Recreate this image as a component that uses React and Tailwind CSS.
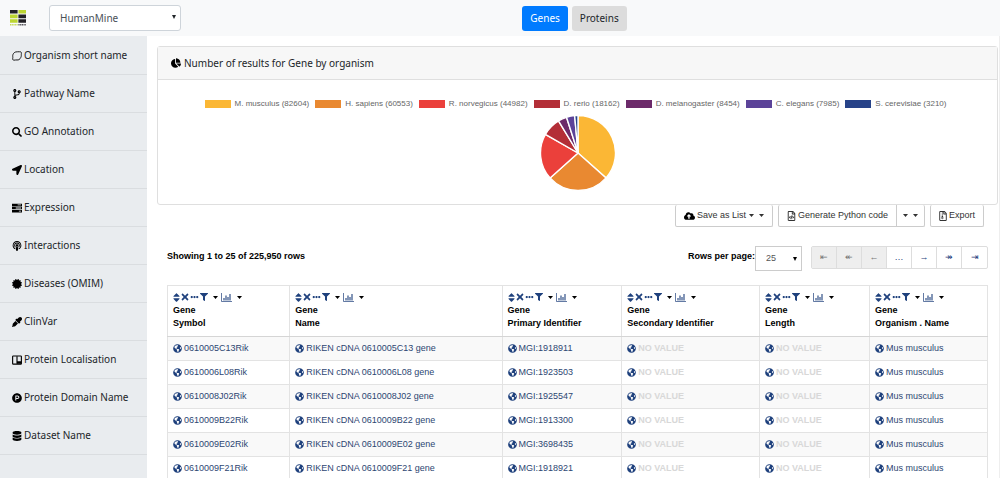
import { useState } from 'react'
import {
  FaCodeBranch,
  FaSearch,
  FaLocationArrow,
  FaPodcast,
  FaCertificate,
  FaEyeDropper,
  FaProductHunt,
  FaDatabase,
  FaChartPie,
  FaGlobeAmericas,
  FaCloudUploadAlt,
  FaRegFileCode,
  FaRegFileArchive,
  FaSort,
  FaTimes,
  FaEllipsisH,
  FaFilter
} from 'react-icons/fa'

const ORGANISMS = [
  { name: 'M. musculus', count: 82604, color: '#fbb735' },
  { name: 'H. sapiens', count: 60553, color: '#e98931' },
  { name: 'R. norvegicus', count: 44982, color: '#eb403b' },
  { name: 'D. rerio', count: 18162, color: '#b32e37' },
  { name: 'D. melanogaster', count: 8454, color: '#6c2a6a' },
  { name: 'C. elegans', count: 7985, color: '#5c4399' },
  { name: 'S. cerevisiae', count: 3210, color: '#274389' }
];

const FILTERS = [
  { label: 'Organism short name', icon: LemonIcon },
  { label: 'Pathway Name', icon: FaCodeBranch },
  { label: 'GO Annotation', icon: FaSearch },
  { label: 'Location', icon: FaLocationArrow },
  { label: 'Expression', icon: BarsIcon },
  { label: 'Interactions', icon: FaPodcast },
  { label: 'Diseases (OMIM)', icon: FaCertificate },
  { label: 'ClinVar', icon: FaEyeDropper },
  { label: 'Protein Localisation', icon: BoardIcon },
  { label: 'Protein Domain Name', icon: FaProductHunt },
  { label: 'Dataset Name', icon: FaDatabase }
];

const COLUMNS = [
  { title: 'Symbol', width: 'w-[14.9%]' },
  { title: 'Name', width: 'w-[25.9%]' },
  { title: 'Primary Identifier', width: 'w-[14.6%]' },
  { title: 'Secondary Identifier', width: 'w-[16.8%]' },
  { title: 'Length', width: 'w-[13.4%]' },
  { title: 'Organism . Name', width: 'w-[14.4%]' }
];

const GENES = [
  ['0610005C13', 'MGI:1918911'],
  ['0610006L08', 'MGI:1923503'],
  ['0610008J02', 'MGI:1925547'],
  ['0610009B22', 'MGI:1913300'],
  ['0610009E02', 'MGI:3698435'],
  ['0610009F21', 'MGI:1918921']
];

const PAGES = [
  { label: 'First page', glyph: '⇤', disabled: true },
  { label: 'Back five pages', glyph: '↞', disabled: true },
  { label: 'Previous page', glyph: '←', disabled: true },
  { label: 'Choose page', glyph: '…' },
  { label: 'Next page', glyph: '→' },
  { label: 'Forward five pages', glyph: '↠' },
  { label: 'Last page', glyph: '⇥' }
];

function LemonIcon({ className }) {
  return (
    <svg viewBox="0 0 16 16" className={className} fill="none" stroke="currentColor" aria-hidden="true">
      <path d="M6 1.5C8 .8 10 1.6 12 1.2C14 .8 15.4 2 15 4C14.6 6 15.4 8 14 10.5C12.500 13.500 10.500 14.800 8 14.300C6 13.900 5 14.800 3 14.700C1.200 14.600.7 13 1.200 11.500C1.700 10 .6 8 1.600 5.500C2.500 3.200 4 2.200 6 1.500Z" strokeWidth="1.4" />
    </svg>
  );
}

function BarsIcon({ className }) {
  return (
    <svg viewBox="0 0 16 16" className={className} fill="currentColor" aria-hidden="true">
      <path fillRule="evenodd" d="M0 1h16v4H0zM9 2.300h5.500v1.400H9zM0 6h16v4H0zM6 7.300h8.500v1.400H6zM0 11h16v4H0zM11 12.300h3.500v1.400H11z" />
    </svg>
  );
}

function BoardIcon({ className }) {
  return (
    <svg viewBox="0 0 16 16" className={className} fill="none" stroke="currentColor" aria-hidden="true">
      <rect x="1" y="1.5" width="14" height="13" rx="1" strokeWidth="1.8" />
      <path d="M8 2v12" strokeWidth="1.8" />
      <path d="M8 10h7v4H8z" fill="currentColor" stroke="none" />
    </svg>
  );
}

function ChartIcon({ className }) {
  return (
    <svg viewBox="0 0 22 18" className={className} fill="none" stroke="currentColor" aria-hidden="true">
      <path d="M1 0v17h21" strokeWidth="1.4" />
      <path d="M6 15v-5M10 15V5M14 15V8M18 15V2" strokeWidth="2.2" />
    </svg>
  );
}

function Caret({ className = '' }) {
  return (
    <svg viewBox="0 0 10 6" className={`w-[5px] h-[3px] shrink-0 ${className}`} fill="currentColor" aria-hidden="true">
      <path d="M0 0h10L5 6z" />
    </svg>
  );
}

function SelectArrow({ className = '' }) {
  return (
    <svg viewBox="0 0 8 8" className={`w-1 h-1 pointer-events-none ${className}`} fill="currentColor" aria-hidden="true">
      <path d="M0 0h8L4 8z" />
    </svg>
  );
}

function Logo() {
  return (
    <svg viewBox="0 0 16 17" className="w-4 h-[17px] shrink-0" role="img" aria-label="InterMine">
      <path fill="#222126" d="M0 0h7.600v3.400H0zM8.400 4.600H16v3.600H8.400zM8.400 9.200H16v3.600H8.400z" />
      <path fill="#bcd631" d="M8.400 0H16v3.400H8.400zM0 4.600h7.600v3.600H0zM0 9.200h7.600v3.600H0z" />
      <path stroke="#c5da55" strokeWidth="1.400" strokeDasharray="1.200 .5" d="M0 14.800h7.600" />
      <path stroke="#55545a" strokeWidth="1.400" strokeDasharray="1.200 .5" d="M8.400 14.800H16" />
    </svg>
  );
}

function PieChart() {
  const total = ORGANISMS.reduce((sum, o) => sum + o.count, 0);
  const point = (share) => {
    const angle = share * 2 * Math.PI - Math.PI / 2;
    return `${38 + 37.5 * Math.cos(angle)} ${38 + 37.5 * Math.sin(angle)}`;
  };
  let seen = 0;
  const slices = ORGANISMS.map((o) => {
    const from = seen / total;
    seen += o.count;
    return { color: o.color, d: `M38 38L${point(from)}A37.5 37.5 0 0 1 ${point(seen / total)}Z` };
  });

  return (
    <svg viewBox="0 0 76 76" className="w-[76px] h-[76px]" role="img" aria-label="Genes by organism">
      {slices.map((s) => (
        <path key={s.color} d={s.d} fill={s.color} stroke="#fff" strokeWidth="1.4" />
      ))}
    </svg>
  );
}

function HeaderCell({ title, width }) {
  return (
    <th scope="col" className={`${width} border border-[#e3e3e3] border-b-[#d5d5d5] px-[5px] pt-[5px] pb-[6px] text-left align-top text-black`}>
      <div className="flex items-center h-3 text-[#1f417d]">
        <button aria-label={`Sort by ${title}`}><FaSort className="w-[7px] h-[11px]" /></button>
        <button aria-label={`Remove ${title}`} className="ml-px"><FaTimes className="w-2 h-[10px]" /></button>
        <button aria-label={`Toggle ${title}`} className="ml-px"><FaEllipsisH className="w-[9px] h-2" /></button>
        <button aria-label={`Filter ${title}`} className="flex items-center ml-px">
          <FaFilter className="w-2 h-2" />
          <Caret className="ml-[5px] text-black" />
        </button>
        <button aria-label={`Summary of ${title}`} className="flex items-center ml-[3px]">
          <ChartIcon className="w-[11px] h-[9px]" />
          <Caret className="ml-[5px] text-black" />
        </button>
      </div>
      <div className="mt-px">Gene</div>
      <div>{title}</div>
    </th>
  );
}

function Cell({ children }) {
  return (
    <td className="border border-[#e3e3e3] px-[5px] h-6 whitespace-nowrap">
      <a href="#" className="flex items-center gap-[2px] text-[#2d4672]">
        <FaGlobeAmericas className="w-[9px] h-[9px] shrink-0 text-[#1f417d]" />
        {children || <span className="font-bold text-[#d8d8d8]">NO VALUE</span>}
      </a>
    </td>
  );
}

function App() {
  const [mine, setMine] = useState('HumanMine');
  const [view, setView] = useState('Genes');
  const [pageSize, setPageSize] = useState('25');

  return (
    <div className="h-screen flex flex-col overflow-hidden bg-white font-['Noto_Sans',sans-serif] text-[10px] text-[#212529]">
      {/* Top bar */}
      <header className="h-9 shrink-0 flex items-center bg-[#f8f9fa] pl-[10px]">
        <Logo />
        <div className="relative ml-[23px]">
          <select
            aria-label="Mine"
            value={mine}
            onChange={(e) => setMine(e.target.value)}
            className="appearance-none block w-[132px] h-[26px] pl-[10px] rounded-[3px] border border-[#ced4da] bg-white text-[#495057]"
          >
            <option>HumanMine</option>
          </select>
          <SelectArrow className="absolute right-[5px] top-[10px]" />
        </div>
        <nav className="flex-1 flex justify-center gap-1 pr-8">
          {['Genes', 'Proteins'].map((name) => (
            <button
              key={name}
              onClick={() => setView(name)}
              className={`h-[25px] px-2 rounded-[3px] ${view === name ? 'bg-[#007bff] text-white' : 'bg-[#dcdcdc] text-[#212529]'}`}
            >
              {name}
            </button>
          ))}
        </nav>
      </header>

      <div className="flex-1 min-h-0 flex">
        {/* Filters */}
        <aside className="w-[147px] shrink-0 bg-[#e9ecef] pt-px">
          <ul>
            {FILTERS.map(({ label, icon: Icon }) => (
              <li key={label} className="h-[38px] border-b border-[#dadde0]">
                <a href="#" className="flex items-center gap-[2px] h-full pl-3">
                  <Icon className="w-[10px] h-[10px] shrink-0 text-black" />
                  {label}
                </a>
              </li>
            ))}
          </ul>
        </aside>

        <main className="flex-1 min-w-0 pl-[10px] pt-[10px] pr-px">
          {/* Results by organism */}
          <section className="h-[159px] rounded-[3px] border border-[#dfdfdf] bg-white">
            <h2 className="flex items-center gap-[3px] h-[33px] pl-[13px] bg-[#f7f7f7] border-b border-[#dfdfdf]">
              <FaChartPie className="w-[10px] h-[10px] text-black" />
              Number of results for Gene by organism
            </h2>
            <ul className="flex justify-center gap-[6px] mt-[18px] pr-1 font-['Liberation_Sans',Arial,sans-serif] text-[8px] leading-3 text-[#666]">
              {ORGANISMS.map((o) => (
                <li key={o.name} className="flex items-center gap-1 whitespace-nowrap">
                  <span className="w-[26px] h-2" style={{ backgroundColor: o.color }} />
                  {o.name} ({o.count})
                </li>
              ))}
            </ul>
            <div className="flex justify-center mt-[5px]">
              <PieChart />
            </div>
          </section>

          <div className="pl-[10px] pr-[10px] font-['Liberation_Sans',Arial,sans-serif] text-[9px] leading-[13px]">
            {/* List actions */}
            <div className="flex justify-end gap-[5px] pr-1 text-[#333]">
              <button className="flex items-center h-[22px] px-2 border border-t-0 border-[#ccc] rounded-[2px]">
                <FaCloudUploadAlt className="w-[11px] h-[10px] mr-[2px] text-black" />
                Save as List
                <Caret className="ml-[3px]" />
                <Caret className="ml-[5px]" />
              </button>
              <div className="flex">
                <button className="flex items-center gap-[2px] h-[22px] px-2 border border-t-0 border-[#ccc] rounded-l-[2px]">
                  <FaRegFileCode className="w-[9px] h-[10px]" />
                  Generate Python code
                </button>
                <button aria-label="Choose language" className="flex items-center gap-[5px] h-[22px] px-[6px] border border-l-0 border-t-0 border-[#ccc] rounded-r-[2px]">
                  <Caret />
                  <Caret />
                </button>
              </div>
              <button className="flex items-center gap-[2px] h-[22px] px-2 border border-t-0 border-[#ccc] rounded-[2px]">
                <FaRegFileArchive className="w-2 h-[10px]" />
                Export
              </button>
            </div>

            {/* Paging */}
            <div className="flex items-start mt-[19px]">
              <p className="flex-1 pt-1 font-bold text-black">Showing 1 to 25 of 225,950 rows</p>
              <label htmlFor="page-size" className="pt-1 font-bold text-black">Rows per page:</label>
              <div className="relative">
                <select
                  id="page-size"
                  value={pageSize}
                  onChange={(e) => setPageSize(e.target.value)}
                  className="appearance-none block w-[47px] h-[25px] pl-[10px] border border-[#ccc] bg-white text-[#555]"
                >
                  <option>25</option>
                </select>
                <SelectArrow className="absolute right-[5px] top-[11px] text-black" />
              </div>
              <div className="flex ml-[9px] border border-[#ddd] rounded-[2px] divide-x divide-[#ddd]">
                {PAGES.map((page) => (
                  <button
                    key={page.label}
                    aria-label={page.label}
                    disabled={page.disabled}
                    className={`w-[25px] h-[21px] ${page.disabled ? 'bg-[#eee] text-[#777]' : 'text-[#1f417d]'}`}
                  >
                    {page.glyph}
                  </button>
                ))}
              </div>
            </div>

            <table className="w-full mt-[14px] table-fixed border-collapse">
              <thead>
                <tr>
                  {COLUMNS.map((column) => (
                    <HeaderCell key={column.title} title={column.title} width={column.width} />
                  ))}
                </tr>
              </thead>
              <tbody>
                {GENES.map(([id, primary]) => (
                  <tr key={id} className="odd:bg-[#f9f9f9]">
                    <Cell>{id}Rik</Cell>
                    <Cell>RIKEN cDNA {id} gene</Cell>
                    <Cell>{primary}</Cell>
                    <Cell />
                    <Cell />
                    <Cell>Mus musculus</Cell>
                  </tr>
                ))}
              </tbody>
            </table>
          </div>
        </main>
        <div className="w-px shrink-0 bg-[#eee]" />
      </div>
    </div>
  );
}

export default App
